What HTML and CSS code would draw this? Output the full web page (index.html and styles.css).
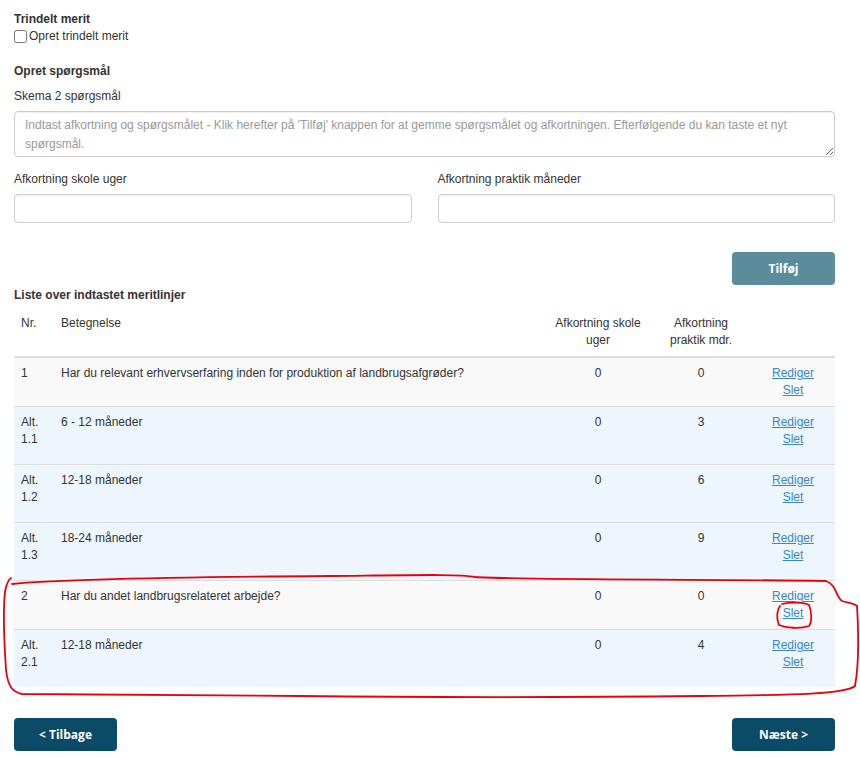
FILE: index.html
```html
<!DOCTYPE html>
<html lang="da">
<head>
  <meta charset="UTF-8" />
  <meta name="viewport" content="width=device-width, initial-scale=1.0"/>
  <title>Merit</title>
  <link rel="stylesheet" href="styles.css">
</head>
<body>
  <div class="screen">
    <div class="page">
      <h4 class="heading">Trindelt merit</h4>
      <label class="check"><input type="checkbox"> Opret trindelt merit</label>

      <h4 class="heading section">Opret spørgsmål</h4>
      <label class="field-label" for="question">Skema 2 spørgsmål</label>
      <textarea id="question" class="textarea" placeholder="Indtast afkortning og spørgsmålet - Klik herefter på 'Tilføj' knappen for at gemme spørgsmålet og afkortningen. Efterfølgende du kan taste et nyt spørgsmål."></textarea>

      <div class="field-row">
        <div class="field">
          <label class="field-label" for="school">Afkortning skole uger</label>
          <input id="school" class="input" type="text">
        </div>
        <div class="field">
          <label class="field-label" for="practice">Afkortning praktik måneder</label>
          <input id="practice" class="input" type="text">
        </div>
      </div>

      <div class="add-row">
        <button class="btn btn-light">Tilføj</button>
      </div>

      <h4 class="heading list-title">Liste over indtastet meritlinjer</h4>
      <table class="merit-table">
        <colgroup>
          <col class="col-nr">
          <col>
          <col class="col-school">
          <col class="col-practice">
          <col class="col-actions">
        </colgroup>
        <thead>
          <tr>
            <th>Nr.</th>
            <th class="left">Betegnelse</th>
            <th>Afkortning skole uger</th>
            <th>Afkortning praktik mdr.</th>
            <th></th>
          </tr>
        </thead>
        <tbody>
          <tr class="question">
            <td>1</td>
            <td class="left">Har du relevant erhvervserfaring inden for produktion af landbrugsafgrøder?</td>
            <td class="num">0</td>
            <td class="num">0</td>
            <td class="actions"><a href="#">Rediger</a><br><a href="#">Slet</a></td>
          </tr>
          <tr class="alt">
            <td>Alt.<br>1.1</td>
            <td class="left">6 - 12 måneder</td>
            <td class="num">0</td>
            <td class="num">3</td>
            <td class="actions"><a href="#">Rediger</a><br><a href="#">Slet</a></td>
          </tr>
          <tr class="alt">
            <td>Alt.<br>1.2</td>
            <td class="left">12-18 måneder</td>
            <td class="num">0</td>
            <td class="num">6</td>
            <td class="actions"><a href="#">Rediger</a><br><a href="#">Slet</a></td>
          </tr>
          <tr class="alt">
            <td>Alt.<br>1.3</td>
            <td class="left">18-24 måneder</td>
            <td class="num">0</td>
            <td class="num">9</td>
            <td class="actions"><a href="#">Rediger</a><br><a href="#">Slet</a></td>
          </tr>
          <tr class="question">
            <td>2</td>
            <td class="left">Har du andet landbrugsrelateret arbejde?</td>
            <td class="num">0</td>
            <td class="num">0</td>
            <td class="actions"><a href="#">Rediger</a><br><a href="#">Slet</a></td>
          </tr>
          <tr class="alt">
            <td>Alt.<br>2.1</td>
            <td class="left">12-18 måneder</td>
            <td class="num">0</td>
            <td class="num">4</td>
            <td class="actions"><a href="#">Rediger</a><br><a href="#">Slet</a></td>
          </tr>
        </tbody>
      </table>

      <div class="nav-row">
        <button class="btn btn-dark">&lt; Tilbage</button>
        <button class="btn btn-dark">Næste &gt;</button>
      </div>
    </div>

    <!-- hand-drawn red marks on top of the screenshot -->
    <svg class="marks" viewBox="0 0 860 758">
      <path d="M12,584 C60,579 200,577 330,576 C420,575 460,574 475,577 C520,580 700,579 826,581 C836,584 836,597 842,601 C848,603 854,603 857,606 C859,640 858,670 855,686 C845,694 800,695 700,696 C600,697 470,698 300,696 C150,695 60,695 22,694 C12,692 8,686 6,670 C4,640 3,610 5,592 C6,586 8,580 11,578"/>
      <path d="M782,604 C790,602 804,602 809,605 C812,612 812,622 809,626 C800,629 786,628 779,625 C776,618 777,610 780,606"/>
    </svg>
  </div>
</body>
</html>
```

FILE: styles.css
```css
body {
  margin: 0;
  font-family: "Liberation Sans", Arial, sans-serif;
  font-size: 12px;
  line-height: 17px;
  color: #333;
  background: #fff;
}

.screen {
  position: relative;
  width: 860px;
  height: 758px;
  overflow: hidden;
}

.page {
  padding: 11px 25px 0 14px;
}

.heading {
  margin: 0;
  font-size: 12px;
  font-weight: bold;
}

.heading.section {
  margin-top: 18px;
  margin-bottom: 8px;
}

.check {
  display: flex;
  align-items: center;
  gap: 2px;
}

.check input {
  margin: 0;
  width: 13px;
  height: 13px;
}

.field-label {
  display: block;
  margin-bottom: 6px;
}

.textarea {
  display: block;
  box-sizing: border-box;
  width: 100%;
  height: 46px;
  padding: 4px 10px;
  border: 1px solid #ccc;
  border-radius: 4px;
  box-shadow: inset 0 1px 1px rgba(0, 0, 0, 0.06);
  font-family: inherit;
  font-size: 12px;
  line-height: 19px;
  color: #333;
}

.textarea::placeholder {
  color: #999;
}

.field-row {
  display: grid;
  grid-template-columns: 1fr 1fr;
  gap: 26px;
  margin-top: 14px;
}

.input {
  display: block;
  box-sizing: border-box;
  width: 100%;
  height: 29px;
  border: 1px solid #ccc;
  border-radius: 4px;
  box-shadow: inset 0 1px 1px rgba(0, 0, 0, 0.06);
}

.add-row {
  display: flex;
  justify-content: flex-end;
  margin-top: 29px;
}

.btn {
  width: 103px;
  height: 33px;
  border: none;
  border-radius: 4px;
  color: #fff;
  font-family: "Open Sans", sans-serif;
  font-size: 12px;
  font-weight: bold;
}

.btn-light {
  background: #5b8c9c;
}

.btn-dark {
  background: #0b4b67;
}

.list-title {
  margin-top: 2px;
}

.merit-table {
  width: 100%;
  margin-top: 4px;
  border-collapse: collapse;
  table-layout: fixed;
}

.col-nr { width: 40px; }
.col-school { width: 106px; }
.col-practice { width: 100px; }
.col-actions { width: 84px; }

.merit-table th,
.merit-table td {
  padding: 7px;
  vertical-align: top;
  text-align: left;
  font-weight: normal;
}

.merit-table th {
  text-align: center;
  border-bottom: 2px solid #ddd;
}

.merit-table th:first-child,
.merit-table th.left {
  text-align: left;
}

.merit-table td.num,
.merit-table td.actions {
  text-align: center;
}

.merit-table tbody tr {
  border-top: 1px solid #ddd;
}

.merit-table tr.question {
  background: #f9f9f9;
}

.merit-table tr.alt {
  background: #eef6fd;
}

.merit-table tr.alt td {
  padding-bottom: 16px;
}

.actions a {
  color: #3a86c6;
  text-decoration: underline;
}

.nav-row {
  display: flex;
  justify-content: space-between;
  margin-top: 31px;
}

.marks {
  position: absolute;
  top: 0;
  left: 0;
  width: 860px;
  height: 758px;
  pointer-events: none;
}

.marks path {
  fill: none;
  stroke: #e8000b;
  stroke-width: 1.8;
  stroke-linecap: round;
}
```
